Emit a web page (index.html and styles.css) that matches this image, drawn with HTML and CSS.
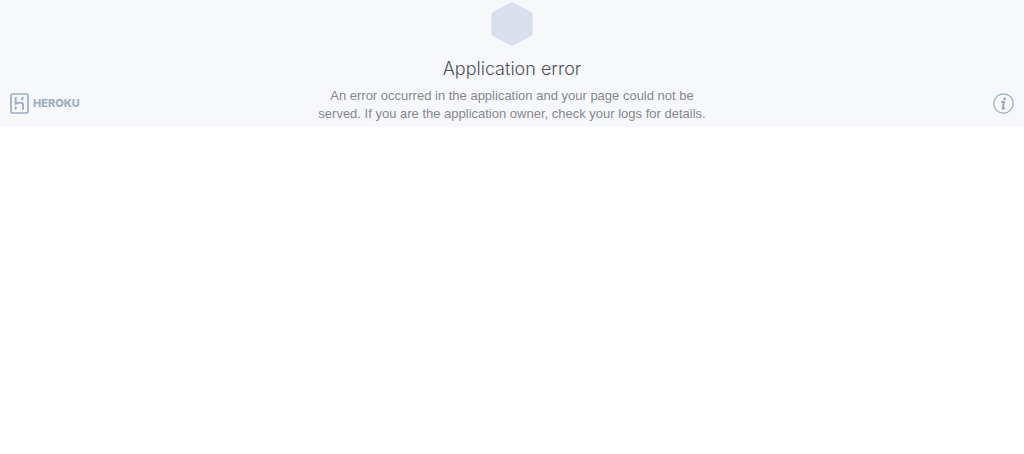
FILE: index.html
```
<!DOCTYPE html>
<html lang="en">
<head>
  <meta charset="UTF-8">
  <meta name="viewport" content="width=device-width,initial-scale=1.0">
  <title>Application Error</title>
  <link rel="stylesheet" href="styles.css">
</head>
<body>
  <main class="error-page">
    <a class="brand" href="#">
      <svg class="brand-mark" viewBox="0 0 19 21" aria-hidden="true">
        <rect x="1" y="1" width="17" height="19" rx="1.6" stroke-width="1.7"/>
        <path d="M5.7 4v6.8c2-.9 3.7-1.2 5-1.2 1.6 0 2.4.8 2.4 2.3V17M13.1 4c-.2 1.2-.8 2.2-1.7 3.2" stroke-width="1.9"/>
        <path class="fill" d="M4.9 12.8v4.4L7.3 15z"/>
      </svg>
      <span class="brand-name">HEROKU</span>
    </a>

    <div class="message">
      <svg class="hexagon" viewBox="0 0 42 44" aria-hidden="true">
        <path d="M19.2.7q1.8-1 3.6 0L40 9.9q1.6 1 1.6 3.3v17.6q0 2.2-1.6 3.3l-17.2 9.2q-1.8 1-3.6 0L2 34.1q-1.6-1.1-1.6-3.3V13.2q0-2.2 1.6-3.3z"/>
      </svg>
      <h1>Application error</h1>
      <p>An error occurred in the application and your page could not be served. If you are the application owner, check your logs for details.</p>
    </div>

    <a class="info" href="#" aria-label="More information">
      <svg viewBox="0 0 21 21" aria-hidden="true">
        <circle cx="10.5" cy="10.5" r="9.7" stroke-width="1.3"/>
        <circle class="fill" cx="11.6" cy="5.7" r="1.5"/>
        <path d="M8 8.9h3.1l-1.5 6q-.2 1 .6.8l1.9-.8" stroke-width="2"/>
      </svg>
    </a>
  </main>
</body>
</html>
```
FILE: styles.css
```
body { margin: 0; background: #fff; font-family: "Liberation Sans", Arial, sans-serif; }
.error-page {
  display: grid;
  grid-template-columns: 1fr auto 1fr;
  align-items: end;
  padding: 2px 10px 4px;
  background: #f7f8fc;
}
svg { display: block; fill: none; stroke: #9fadc3; }
svg .fill { fill: #9fadc3; stroke: none; }

.brand { display: flex; align-items: center; gap: 4px; justify-self: start; margin-bottom: 9px; color: #9fadc3; text-decoration: none; }
.brand-mark { width: 19px; height: 21px; }
.brand-name { font: 800 11px/21px Inter, sans-serif; }

.message { max-width: 390px; text-align: center; }
.hexagon { width: 42px; height: 44px; margin: 0 auto; }
.hexagon path { fill: #d9e0ec; stroke: none; }
h1 { margin: 10px 0 5px; font-family: Inter, sans-serif; font-size: 18px; font-weight: 300; line-height: 26px; color: #505258; }
p { margin: 0; font-size: 13px; line-height: 18px; color: #85878e; }

.info { justify-self: end; margin-bottom: 9px; }
.info svg { width: 21px; height: 21px; }
```
